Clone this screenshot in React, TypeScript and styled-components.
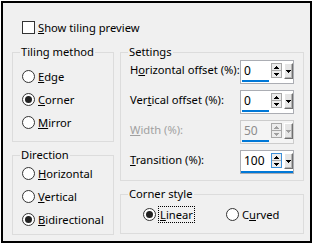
import React from 'react'
import styled, { createGlobalStyle } from 'styled-components'

const Global = createGlobalStyle`
body {
  margin: 0;
  background: #fff;
  font-family: "Noto Sans", "Open Sans", sans-serif;
  font-size: 11.2px;
  color: #000;
}
`
const Window = styled.div`
box-sizing: border-box;
width: 311px;
height: 242px;
margin: 1px 0 0 1px;
border: 2px solid #000;
background: #f0f0f0;
padding: 16px 6px 0 9px;
display: flex;
flex-direction: column;
`
const CheckRow = styled.label`
display: flex;
align-items: center;
gap: 3px;
height: 16px;
margin: 0 0 10px 10px;
`
const Check = styled.span`
box-sizing: border-box;
width: 13px;
height: 13px;
border: 1px solid #333;
background: #fff;
`
const Columns = styled.div`
display: flex;
gap: 6px;
`
const Column = styled.div<{ $w: number }>`
display: flex;
flex-direction: column;
gap: 6px;
width: ${p => p.$w}px;
`
const Group = styled.fieldset<{ $top?: number; $bottom?: number }>`
margin: 0;
min-width: 0;
border: 1px solid #dcdcdc;
padding: ${p => p.$top ?? 0}px 0 ${p => p.$bottom ?? 0}px 7px;
`
const Legend = styled.legend`
padding: 0 1px;
line-height: 14px;
`
const Option = styled.label`
display: flex;
align-items: center;
gap: 3px;
height: 23px;
margin-left: 2px;
`
const Radio = styled.span<{ $on?: boolean }>`
box-sizing: border-box;
width: 13px;
height: 13px;
border-radius: 50%;
border: 1px solid #333;
background: #fff;
display: grid;
place-items: center;
&::after {
  content: '';
  width: 7px;
  height: 7px;
  border-radius: 50%;
  background: ${p => (p.$on ? '#222' : 'transparent')};
}
`
const Key = styled.u`
text-decoration: underline;
text-underline-offset: 1px;
`
const Focus = styled.span`
outline: 1px dotted #000;
outline-offset: 0;
padding: 0 1px;
`
const SettingRow = styled.div`
display: flex;
align-items: flex-start;
height: 24px;
margin-right: 9px;
`
const SettingLabel = styled.span<{ $off?: boolean }>`
flex: 1;
margin: 2px 0 0 2px;
line-height: 16px;
color: ${p => (p.$off ? '#a0a0a0' : '#000')};
`
const Rows = styled.div`
display: flex;
flex-direction: column;
gap: 6px;
`
const Spin = styled.div<{ $off?: boolean; $focus?: boolean }>`
box-sizing: border-box;
width: 54px;
height: 24px;
display: flex;
align-items: flex-start;
border: 1px solid ${p => (p.$off ? '#cccccc' : '#abadb3')};
background: ${p => (p.$off ? '#f4f4f4' : '#fff')};
box-shadow: ${p => (p.$focus ? 'inset 0 -2px #0078d7' : 'none')};
`
const Edit = styled.span<{ $off?: boolean; $focus?: boolean }>`
box-sizing: border-box;
width: 27px;
height: 21px;
margin-left: 1px;
padding: 1px 0 0 2px;
line-height: 17px;
font-size: 12px;
color: ${p => (p.$off ? '#8c8c8c' : '#000')};
border-bottom: 2px solid ${p => (p.$focus ? 'transparent' : '#0078d7')};
`
const Arrows = styled.div<{ $focus?: boolean }>`
box-sizing: border-box;
width: 11px;
height: 15px;
margin: 2px 0 0 2px;
display: flex;
flex-direction: column;
border: 1px solid ${p => (p.$focus ? '#3c8fd9' : '#a8a8a8')};
background: #ececec;
`
const ArrowCell = styled.div<{ $line?: boolean }>`
flex: 1;
display: grid;
place-items: center;
border-top: ${p => (p.$line ? '1px solid #a8a8a8' : 'none')};
`
const Drop = styled.div`
box-sizing: border-box;
width: 9px;
height: 16px;
margin: 2px 0 0 2px;
display: grid;
place-items: center;
background: #e6e6e6;
border: 1px solid;
border-color: #fff #6f6f6f #6f6f6f #fff;
box-shadow: inset -1px -1px #b4b4b4;
`
const StyleRow = styled.div`
display: grid;
grid-template-columns: 83px auto;
margin-left: 15px;
`
const StyleOption = styled.label`
display: flex;
align-items: center;
gap: 3px;
height: 23px;
`

const Up = ({ c }: { c: string }) => (
  <svg width="5" height="3" viewBox="0 0 5 3" shapeRendering="crispEdges">
    <path d="M2 0h1v1h1v1h1v1H0V2h1V1h1z" fill={c} />
  </svg>
)
const Down = ({ c }: { c: string }) => (
  <svg width="5" height="3" viewBox="0 0 5 3" shapeRendering="crispEdges">
    <path d="M0 0h5v1H4v1H3v1H2V2H1V1H0z" fill={c} />
  </svg>
)

type Setting = { label: React.ReactNode; value: string; off?: boolean; focus?: boolean }

const settings: Setting[] = [
  { label: <>H<Key>o</Key>rizontal offset (%):</>, value: '0' },
  { label: <>Ver<Key>t</Key>ical offset (%):</>, value: '0' },
  { label: <><Key>W</Key>idth (%):</>, value: '50', off: true },
  { label: <><Key>T</Key>ransition (%):</>, value: '100', focus: true },
]

const SpinEdit = ({ value, off, focus }: Setting) => {
  const c = off ? '#a0a0a0' : '#000'
  return (
    <Spin $off={off} $focus={focus}>
      <Edit $off={off} $focus={focus}>{value}</Edit>
      <Arrows $focus={focus}>
        <ArrowCell><Up c={c} /></ArrowCell>
        <ArrowCell $line><Down c={c} /></ArrowCell>
      </Arrows>
      <Drop><Down c={c} /></Drop>
    </Spin>
  )
}

const App = () => {
  return (
    <>
      <Global />
      <Window>
        <CheckRow>
          <Check />
          <span><Key>S</Key>how tiling preview</span>
        </CheckRow>
        <Columns>
          <Column $w={102}>
            <Group $top={6} $bottom={7}>
              <Legend>Tiling method</Legend>
              <Option><Radio /><span><Key>E</Key>dge</span></Option>
              <Option><Radio $on /><span><Key>C</Key>orner</span></Option>
              <Option><Radio /><span><Key>M</Key>irror</span></Option>
            </Group>
            <Group $top={0} $bottom={3}>
              <Legend>Direction</Legend>
              <Option><Radio /><span><Key>H</Key>orizontal</span></Option>
              <Option><Radio /><span><Key>V</Key>ertical</span></Option>
              <Option><Radio $on /><span><Key>B</Key>idirectional</span></Option>
            </Group>
          </Column>
          <Column $w={184}>
            <Group $top={1} $bottom={6}>
              <Legend>Settings</Legend>
              <Rows>
                {settings.map((s, i) => (
                  <SettingRow key={i}>
                    <SettingLabel $off={s.off}>{s.label}</SettingLabel>
                    <SpinEdit {...s} />
                  </SettingRow>
                ))}
              </Rows>
            </Group>
            <Group $top={2} $bottom={7}>
              <Legend>Corner style</Legend>
              <StyleRow>
                <StyleOption><Radio $on /><Focus><Key>L</Key>inear</Focus></StyleOption>
                <StyleOption><Radio /><span>C<Key>u</Key>rved</span></StyleOption>
              </StyleRow>
            </Group>
          </Column>
        </Columns>
      </Window>
    </>
  )
}

export default App
